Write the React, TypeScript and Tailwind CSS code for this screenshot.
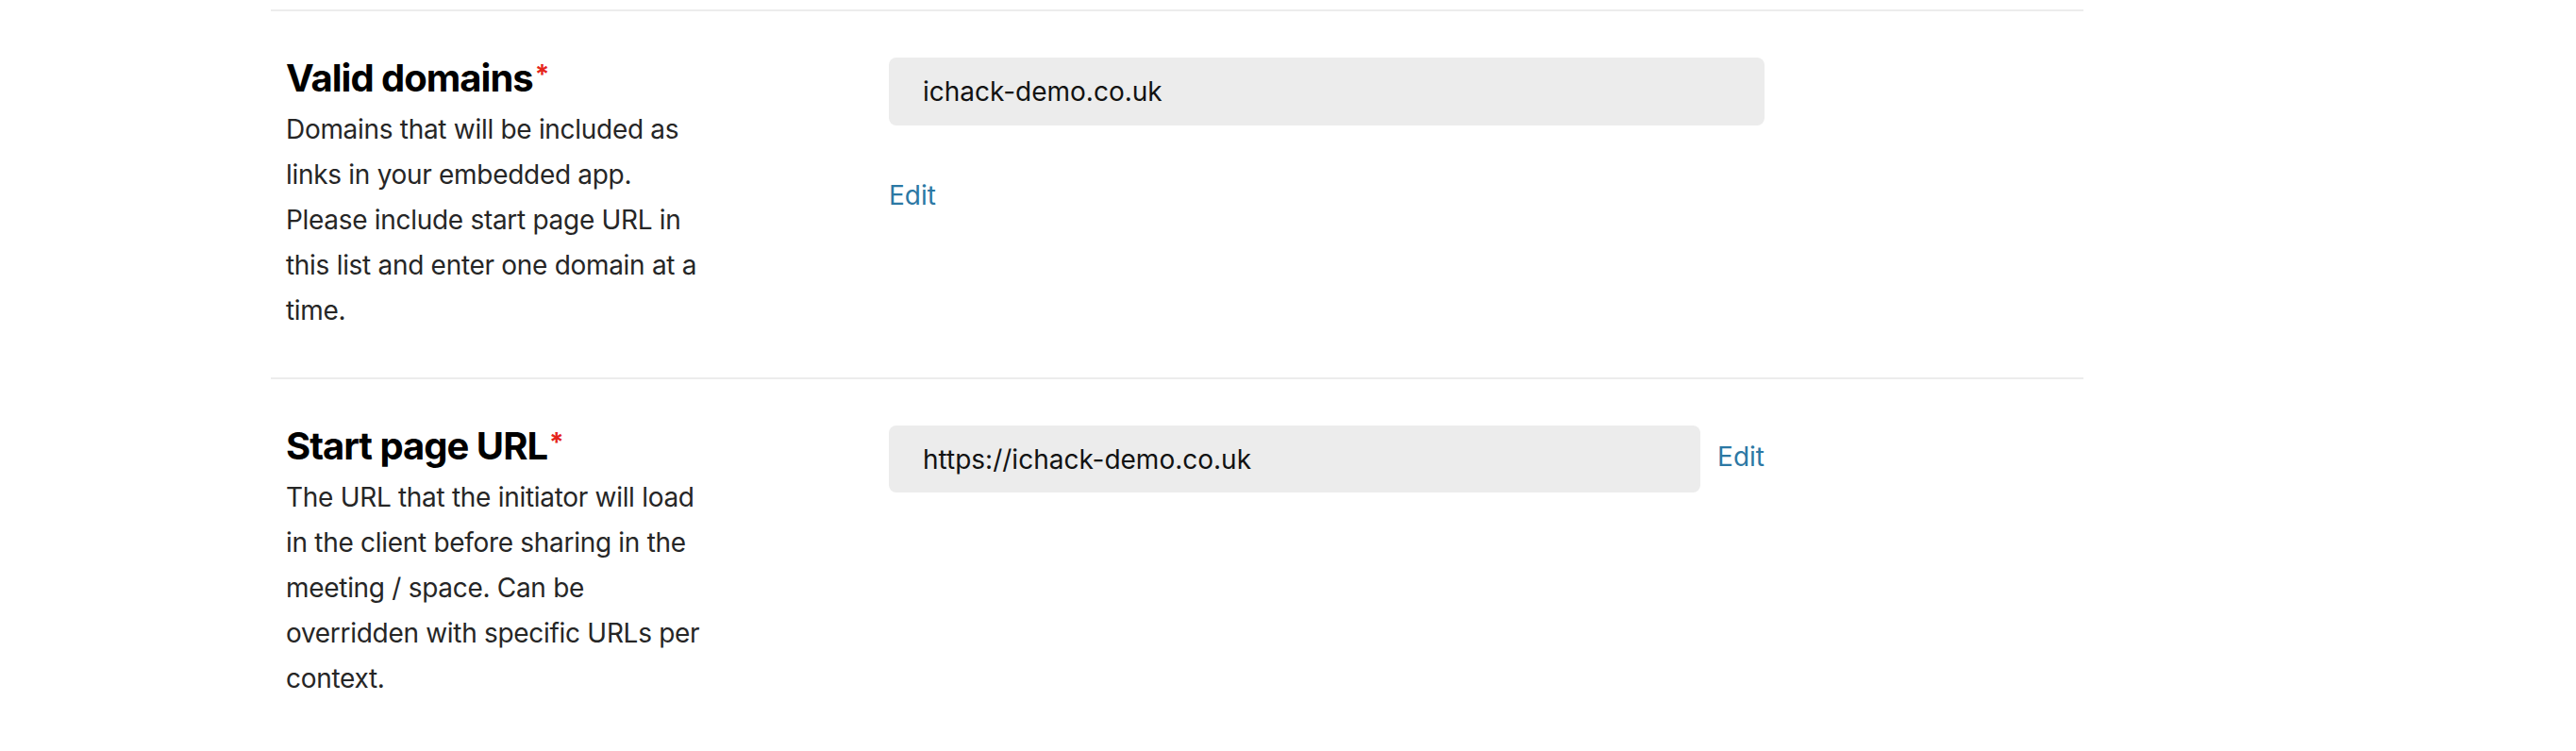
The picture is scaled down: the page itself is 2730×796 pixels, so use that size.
import React from 'react';

type Field = {
  label: string;
  help: string;
  value: string;
  inlineEdit: boolean;
};

const fields: Field[] = [
  {
    label: 'Valid domains',
    help: 'Domains that will be included as links in your embedded app. Please include start page URL in this list and enter one domain at a time.',
    value: 'ichack-demo.co.uk',
    inlineEdit: false,
  },
  {
    label: 'Start page URL',
    help: 'The URL that the initiator will load in the client before sharing in the meeting / space. Can be overridden with specific URLs per context.',
    value: 'https://ichack-demo.co.uk',
    inlineEdit: true,
  },
];

function FieldRow({ field }: { field: Field }) {
  return (
    <div className="border-t-2 border-[#ececec] grid grid-cols-[655px_928px] pt-[47px] pb-[47px]">
      {/* Label + help text */}
      <div className="pl-4">
        <h3 className="text-[40px] leading-[48px] font-bold tracking-[-1px] text-black">
          {field.label}
          <span className="text-[#e5251b] text-[28px] align-top leading-none relative top-[6px] ml-[2px]">*</span>
        </h3>
        <p className="mt-[6px] max-w-[452px] text-[28px] leading-[48px] tracking-[-0.3px] text-[#262626]">{field.help}</p>
      </div>

      {/* Value + edit */}
      {field.inlineEdit ? (
        <div className="flex items-center gap-[18px] self-start mt-[2px]">
          <div className="flex-1 h-[71px] rounded-lg bg-[#ececec] flex items-center px-[36px] text-[28px] text-[#121212]">
            {field.value}
          </div>
          <a className="mb-[6px] text-[28px] text-[#2b78a4] cursor-pointer">Edit</a>
        </div>
      ) : (
        <div className="flex flex-col items-start mt-[2px]">
          <div className="w-full h-[72px] rounded-lg bg-[#ececec] flex items-center px-[36px] text-[28px] text-[#121212]">
            {field.value}
          </div>
          <a className="mt-[54px] text-[28px] leading-[40px] text-[#2b78a4] cursor-pointer">Edit</a>
        </div>
      )}
    </div>
  );
}

export default function App() {
  return (
    <div className="min-h-[796px] bg-white pt-[10px]" style={{ fontFamily: 'Inter, "Noto Sans", sans-serif' }}>
      <div className="ml-[287px] w-[1921px]">
        {fields.map((f) => (
          <FieldRow key={f.label} field={f} />
        ))}
      </div>
    </div>
  );
}
